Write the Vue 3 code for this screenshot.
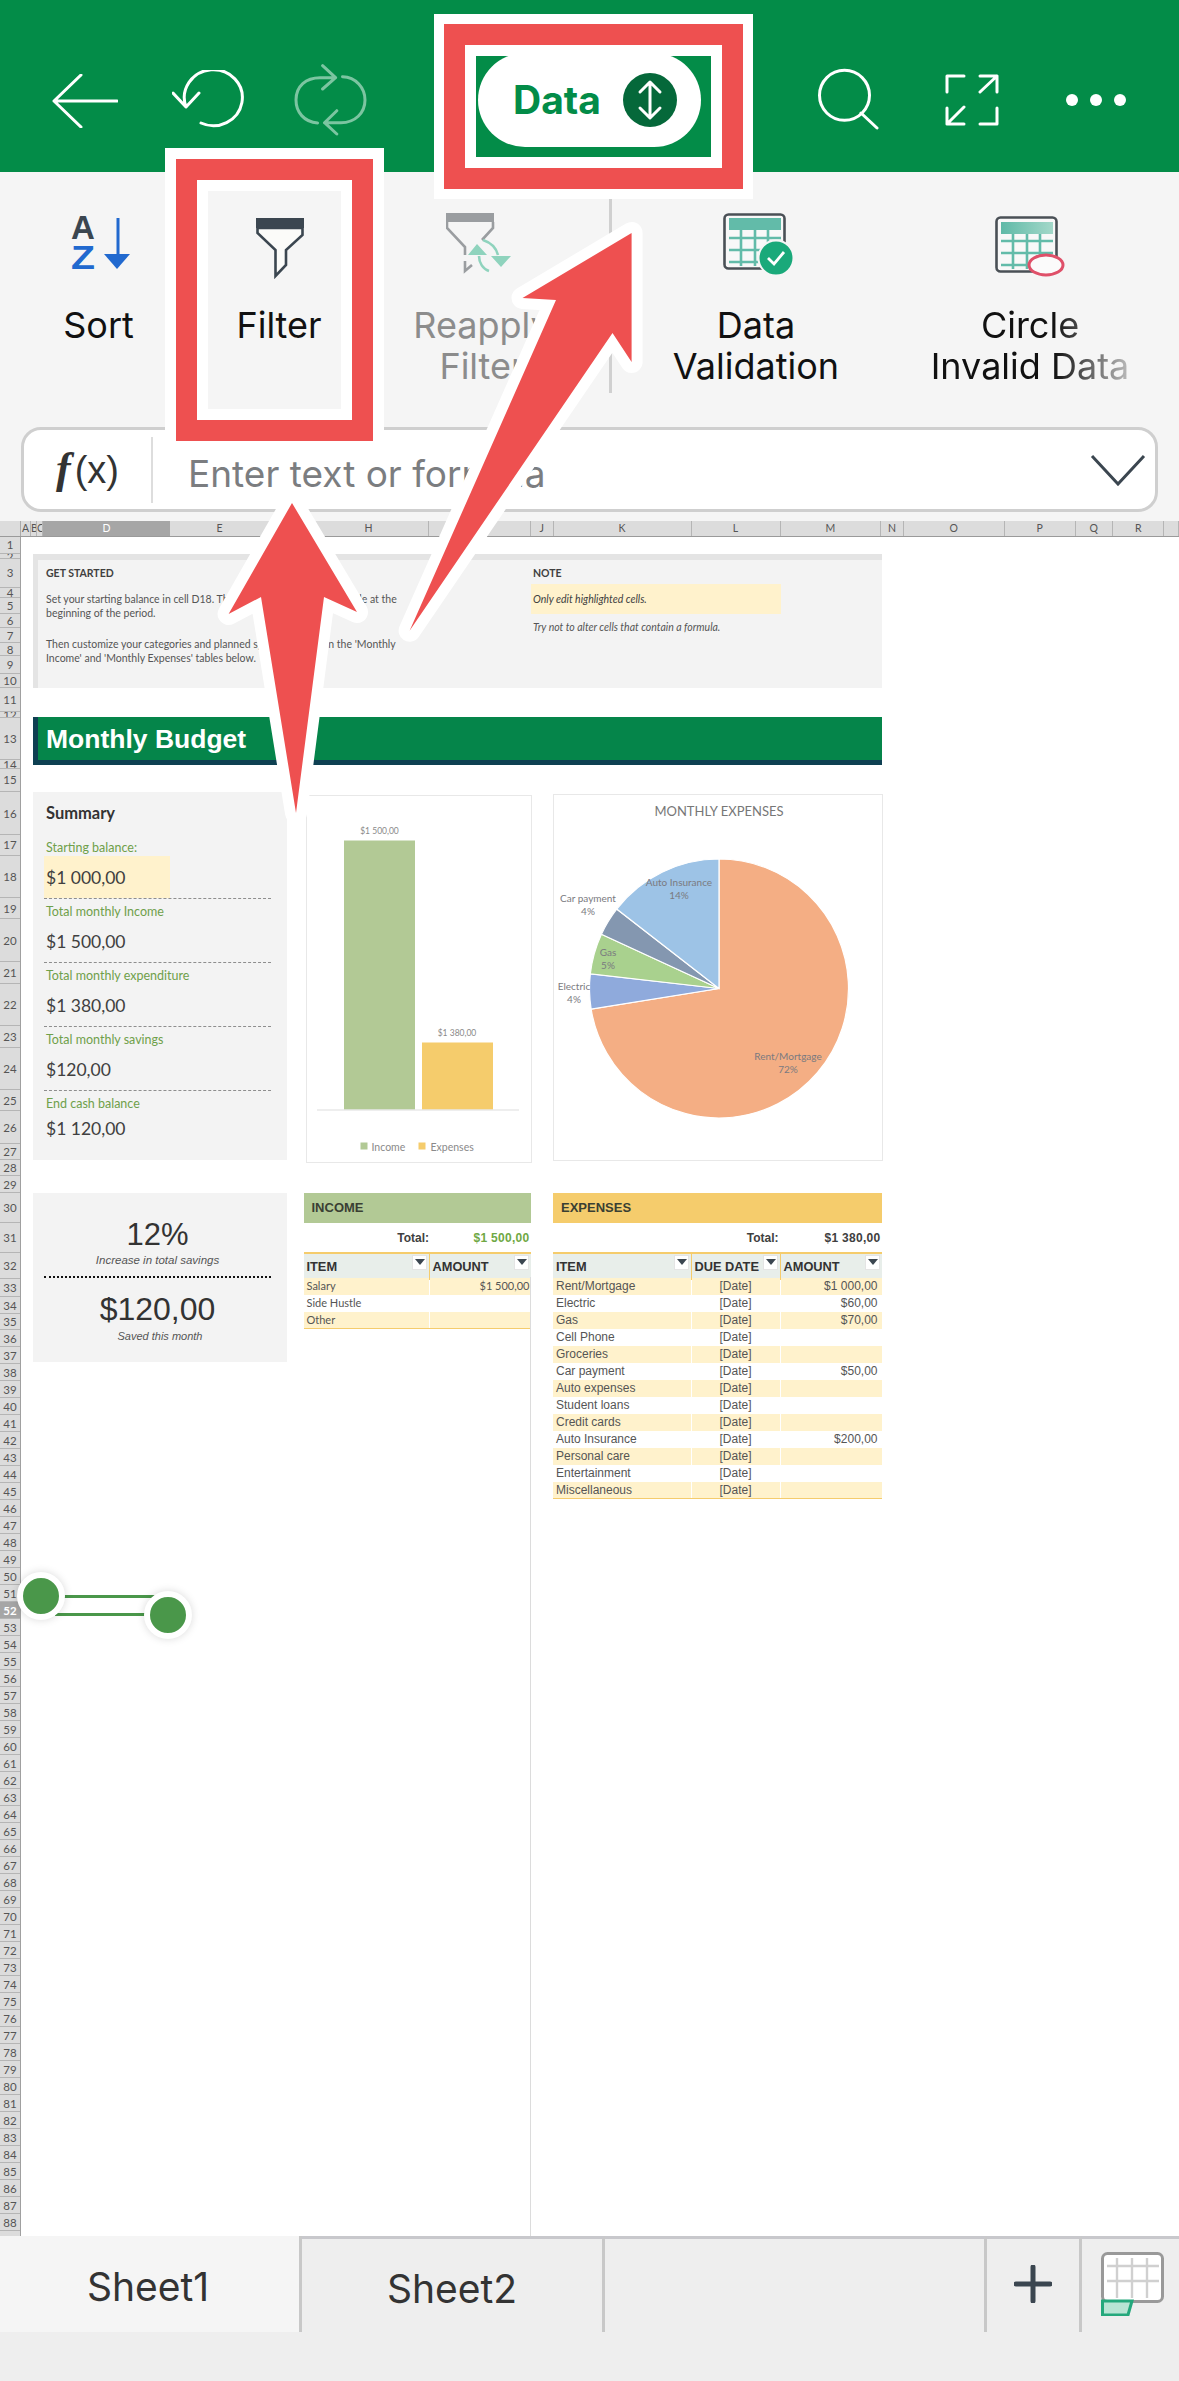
<template>
  <div class="app">
    <!-- green title bar -->
    <header class="topbar">
      <svg class="ic-back" width="66" height="54" viewBox="0 0 66 54"><path d="M2 27L29 1M2 27L29 53M2 27H65" /></svg>
      <svg class="ic-undo" width="72" height="62" viewBox="0 0 72 62"><path d="M14 37A29 28 0 1 1 29 53M1 23L14 37L27 23" /></svg>
      <svg class="ic-redo" width="74" height="72" viewBox="0 0 74 72"><path d="M23.6 59C10 58 2 48 2 36C2 22 12 13.7 26 13.7H41M28.6 1.7L41.6 13.7L28.6 25M48.5 12.7C62 13 71 24 71 36C71 49 61 58.7 47 58.7H30.5M42.8 46.7L30.5 58.7L42.8 70" /></svg>
      <div class="tab-pill">
        <span class="tab-text">Data</span>
        <span class="tab-round">
          <svg width="54" height="54" viewBox="0 0 54 54"><path d="M27 10V44M17 19L27 9L37 19M17 35L27 45L37 35" /></svg>
        </span>
      </div>
      <svg class="ic-search" width="62" height="62" viewBox="0 0 62 62"><circle cx="27.5" cy="27.3" r="25" /><path d="M44 45L60 60" /></svg>
      <svg class="ic-expand" width="54" height="52" viewBox="0 0 54 52"><path d="M2 18V2H19M35 2H52V18M52 2L35 18M2 34V50H19M2 50L19 33M35 50H52V34" /></svg>
      <svg class="ic-more" width="62" height="14" viewBox="0 0 62 14"><circle cx="7" cy="7" r="6" /><circle cx="31" cy="7" r="6" /><circle cx="55" cy="7" r="6" /></svg>
    </header>

    <!-- ribbon -->
    <section class="ribbon">
      <div class="rb-item rb-sort">
        <svg class="rb-icon" width="66" height="64" viewBox="0 0 66 64">
          <text class="az a" x="7" y="26">A</text>
          <text class="az z" x="7" y="56" textLength="24" lengthAdjust="spacingAndGlyphs">Z</text>
          <path d="M54 5V42" fill="none" stroke="#2169cf" stroke-width="3" />
          <path d="M40 41H66L53 56Z" fill="#2169cf" />
        </svg>
        <div class="rb-label">Sort</div>
      </div>
      <div class="rb-item rb-filter">
        <svg class="rb-icon" width="48" height="66" viewBox="0 0 48 66">
          <path d="M1.5 15V20L19.5 37V63L30 52V37L46.5 22V15Z" fill="#fbfbf9" stroke="#3b4650" stroke-width="2.6" />
          <rect y="5" width="48" height="10" fill="#3b4650" />
        </svg>
        <div class="rb-label">Filter</div>
      </div>
      <div class="rb-item rb-reapply">
        <svg class="rb-icon" width="66" height="64" viewBox="0 0 66 64">
          <rect width="48" height="9" fill="#9a9da0" />
          <path d="M1 9V15L19 34V42M47 9V15L36 27M19 48V58L26 52" fill="none" stroke="#9a9da0" stroke-width="2.6" />
          <path d="M22 42L31 31L41 42ZM45 43H65L55 54Z" fill="#8fd3bd" />
          <path d="M33 43C33 50 37 56 43 58M37 27C43 29 50 34 52 42" fill="none" stroke="#8fd3bd" stroke-width="2.6" />
        </svg>
        <div class="rb-label muted">Reapply<br />Filter</div>
      </div>
      <div class="rb-sep"></div>
      <div class="rb-item rb-valid">
        <svg class="rb-icon" width="72" height="64" viewBox="0 0 72 64">
          <rect x="1.5" y="1.5" width="60" height="54" rx="4" fill="#f8f8f8" stroke="#4a5056" stroke-width="2.6" />
          <rect x="6" y="5" width="52" height="12" fill="#62bba9" />
          <path d="M6 25H58M6 37H58M6 49H40M18 17V53M32 17V53M45 17V40" fill="none" stroke="#62bba9" stroke-width="2.6" />
          <circle cx="53" cy="45" r="17.5" fill="#1aa97a" stroke="#f5f5f5" stroke-width="2" />
          <path d="M45 45L51 51L61 39" fill="none" stroke="#fff" stroke-width="2.8" />
        </svg>
        <div class="rb-label">Data<br />Validation</div>
      </div>
      <div class="rb-item rb-circle">
        <svg class="rb-icon" width="72" height="64" viewBox="0 0 72 64">
          <defs>
            <linearGradient id="hd" x1="0" x2="1" y1="0" y2="0"><stop offset="0" stop-color="#5fb9a7" /><stop offset="1" stop-color="#a3d8c9" /></linearGradient>
          </defs>
          <rect x="1.5" y="1.5" width="60" height="54" rx="4" fill="#f8f8f8" stroke="#4a5056" stroke-width="2.6" />
          <rect x="6" y="6" width="52" height="12" fill="url(#hd)" />
          <path d="M6 25H58M6 37H58M6 49H40M18 18V53M32 18V53M45 18V40" fill="none" stroke="#62bba9" stroke-width="2.6" />
          <ellipse cx="51" cy="49" rx="17" ry="10" fill="#fbfbfb" stroke="#df5069" stroke-width="3" />
        </svg>
        <div class="rb-label fade">Circle<br />Invalid Data</div>
      </div>
    </section>

    <!-- formula bar -->
    <section class="formula-wrap">
      <div class="formula">
        <div class="fx"><i>f</i>(x)</div>
        <div class="fx-input">Enter text or formula</div>
        <svg class="fx-chevron" width="56" height="32" viewBox="0 0 56 32"><path d="M2 2L28 30L54 2" /></svg>
      </div>
    </section>

    <!-- column letters -->
    <div class="col-head">
      <div class="corner"></div>
      <div
        v-for="c in columns"
        :key="c.name"
        class="col"
        :class="{ on: c.name === 'D' }"
        :style="{ width: c.w + 'px' }"
      >{{ c.label }}</div>
    </div>

    <main class="grid-area">
      <div class="row-head">
        <div
          v-for="r in rows"
          :key="r.n"
          class="rw"
          :class="{ on: r.n === 52 }"
          :style="{ height: r.h + 'px', lineHeight: r.h + 'px' }"
        >{{ r.n }}</div>
      </div>

      <div class="sheet">
        <div class="intro">
          <div class="intro-left">
            <h4>GET STARTED</h4>
            <p class="p1">Set your starting balance in cell D18. This is the total amount available at the<br />beginning of the period.</p>
            <p class="p2">Then customize your categories and planned spending totals in the 'Monthly<br />Income' and 'Monthly Expenses' tables below.</p>
          </div>
          <div class="intro-right">
            <h4>NOTE</h4>
            <div class="hl">Only edit highlighted cells.</div>
            <p class="try">Try not to alter cells that contain a formula.</p>
          </div>
        </div>

        <div class="banner">Monthly Budget</div>

        <div class="dash">
          <div class="summary">
            <h3>Summary</h3>
            <div v-for="(s, i) in summary" :key="s.label" class="sm-block" :class="{ last: i === summary.length - 1 }">
              <div class="sm-label">{{ s.label }}</div>
              <div class="sm-value" :class="{ input: i === 0 }">{{ s.value }}</div>
            </div>
          </div>

          <div class="chart bar-chart">
            <svg width="226" height="368" viewBox="0 0 226 368">
              <rect x="37" y="44.5" width="71" height="269" fill="#b2c995" />
              <rect x="115" y="246.5" width="71" height="67" fill="#f5cc6c" />
              <path d="M10 314H212" stroke="#ddd" />
              <text class="lbl" x="72.5" y="37.5" text-anchor="middle">$1 500,00</text>
              <text class="lbl" x="150" y="239.5" text-anchor="middle">$1 380,00</text>
              <rect x="53.5" y="346.5" width="7" height="7" fill="#b2c995" />
              <text class="lbl big" x="64.5" y="354.5">Income</text>
              <rect x="111.5" y="346.5" width="7" height="7" fill="#f5cc6c" />
              <text class="lbl big" x="123.5" y="354.5">Expenses</text>
            </svg>
          </div>

          <div class="chart pie-chart">
            <svg width="330" height="367" viewBox="0 0 330 367">
              <text class="pie-title" x="165" y="21" text-anchor="middle">MONTHLY EXPENSES</text>
              <path
                v-for="s in slices"
                :key="s.name"
                :d="s.d"
                :fill="s.color"
                stroke="#fff"
                stroke-width="1.2"
              />
              <template v-for="s in slices" :key="s.name + '-t'">
                <text class="pie-lbl" :x="s.tx" :y="s.ty" text-anchor="middle">{{ s.name }}</text>
                <text class="pie-lbl" :x="s.tx" :y="s.ty + 12.5" text-anchor="middle">{{ s.pct }}</text>
              </template>
            </svg>
          </div>

          <div class="stats">
            <div class="big-num pct">12%</div>
            <div class="cap">Increase in total savings</div>
            <div class="dots"></div>
            <div class="big-num">$120,00</div>
            <div class="cap saved">Saved this month</div>
          </div>

          <div class="tbl income">
            <div class="tbl-title">INCOME</div>
            <div class="tbl-total">
              <span class="t-label">Total:</span>
              <span class="t-val green">$1 500,00</span>
            </div>
            <div class="tbl-head">
              <div class="th">ITEM<span class="drop"></span></div>
              <div class="th">AMOUNT<span class="drop"></span></div>
            </div>
            <div v-for="(r, i) in incomeRows" :key="r.item" class="tr" :class="{ odd: i % 2 === 0 }">
              <div class="td">{{ r.item }}</div>
              <div class="td num">{{ r.amount }}</div>
            </div>
          </div>

          <div class="tbl expenses">
            <div class="tbl-title">EXPENSES</div>
            <div class="tbl-total">
              <span class="t-label">Total:</span>
              <span class="t-val">$1 380,00</span>
            </div>
            <div class="tbl-head">
              <div class="th">ITEM<span class="drop"></span></div>
              <div class="th">DUE DATE<span class="drop"></span></div>
              <div class="th">AMOUNT<span class="drop"></span></div>
            </div>
            <div v-for="(r, i) in expenseRows" :key="r.item" class="tr" :class="{ odd: i % 2 === 0 }">
              <div class="td">{{ r.item }}</div>
              <div class="td mid">[Date]</div>
              <div class="td num">{{ r.amount }}</div>
            </div>
          </div>
        </div>

        <div class="page-line"></div>
      </div>
    </main>

    <!-- sheet tabs -->
    <footer class="tabs">
      <div class="tab-row">
        <div class="sheet-tab active">Sheet1</div>
        <div class="sheet-tab">Sheet2</div>
        <div class="tab-space"></div>
        <div class="tab-add">
          <svg width="38" height="38" viewBox="0 0 38 38"><path d="M19 2V36M2 19H36" /></svg>
        </div>
        <div class="tab-grid">
          <svg width="64" height="64" viewBox="0 0 64 64">
            <rect x="1.5" y="1.5" width="60" height="48" rx="5" fill="#fff" stroke="#999" stroke-width="3" />
            <path d="M6 14H58M6 29H58M16 6V46M31 6V46M46 6V46" fill="none" stroke="#d0d0d0" stroke-width="2.4" />
            <path d="M1.5 49H31L27 63H1.5Z" fill="#b8e4d4" stroke="#24a87c" stroke-width="3" />
          </svg>
        </div>
      </div>
    </footer>

    <!-- selection handles -->
    <div class="sel-line sel-top"></div>
    <div class="sel-line sel-bottom"></div>
    <div class="handle h-left"></div>
    <div class="handle h-right"></div>

    <!-- red tutorial marks -->
    <div class="callout c-data"><div><div></div></div></div>
    <div class="callout c-filter"><div><div></div></div></div>
    <svg class="marks" width="1179" height="2381" viewBox="0 0 1179 2381">
      <polygon points="631.6,233 631.6,362 612.5,333 409.6,630.7 556,300 522.5,298" />
      <polygon points="292,503 357,612 324,597 296,813 261,597 228.6,614" />
    </svg>
  </div>
</template>

<script setup>
import { computed } from 'vue'

const columns = [
  ['A', 10], ['B', 6], ['C', 6], ['D', 127], ['E', 100], ['F', 20], ['G', 19], ['H', 120], ['I', 102],
  ['J', 22.5], ['K', 138], ['L', 89], ['M', 100.5], ['N', 23], ['O', 100.6], ['P', 71], ['Q', 37.4], ['R', 51.5], ['S', 14.5],
].map(([name, w]) => ({ name, w, label: name === 'S' ? '' : name }))

// row heights read off the sheet, the rest are default 17
const customHeights = [
  16.7, 5.7, 28.3, 10.7, 16, 13.3, 15, 13.3, 17.7, 14, 24.7, 5.3, 42, 9.7, 22.3,
  43.3, 20.7, 42, 21, 43, 22, 42, 22, 42, 21, 33, 16, 16, 17.7, 30, 30, 25.3, 18, 17, 16,
]
const rows = Array.from({ length: 89 }, (_, i) => ({ n: i + 1, h: customHeights[i] || 17 }))

const summary = [
  { label: 'Starting balance:', value: '$1 000,00' },
  { label: 'Total monthly Income', value: '$1 500,00' },
  { label: 'Total monthly expenditure', value: '$1 380,00' },
  { label: 'Total monthly savings', value: '$120,00' },
  { label: 'End cash balance', value: '$1 120,00' },
]

const incomeRows = [
  { item: 'Salary', amount: '$1 500,00' },
  { item: 'Side Hustle', amount: '' },
  { item: 'Other', amount: '' },
]

const expenseRows = [
  { item: 'Rent/Mortgage', amount: '$1 000,00' },
  { item: 'Electric', amount: '$60,00' },
  { item: 'Gas', amount: '$70,00' },
  { item: 'Cell Phone', amount: '' },
  { item: 'Groceries', amount: '' },
  { item: 'Car payment', amount: '$50,00' },
  { item: 'Auto expenses', amount: '' },
  { item: 'Student loans', amount: '' },
  { item: 'Credit cards', amount: '' },
  { item: 'Auto Insurance', amount: '$200,00' },
  { item: 'Personal care', amount: '' },
  { item: 'Entertainment', amount: '' },
  { item: 'Miscellaneous', amount: '' },
]

const pieData = [
  { name: 'Rent/Mortgage', value: 1000, pct: '72%', color: '#f4ae84', tx: 234, ty: 265 },
  { name: 'Electric', value: 60, pct: '4%', color: '#8faadc', tx: 20, ty: 195 },
  { name: 'Gas', value: 70, pct: '5%', color: '#a9d18e', tx: 54, ty: 161 },
  { name: 'Car payment', value: 50, pct: '4%', color: '#8497b0', tx: 34, ty: 107 },
  { name: 'Auto Insurance', value: 200, pct: '14%', color: '#9dc3e6', tx: 125, ty: 91 },
]

const slices = computed(() => {
  const cx = 165
  const cy = 193.5
  const r = 129.5
  const total = pieData.reduce((a, p) => a + p.value, 0)
  let angle = -Math.PI / 2
  return pieData.map(p => {
    const next = angle + (p.value / total) * Math.PI * 2
    const x1 = cx + r * Math.cos(angle)
    const y1 = cy + r * Math.sin(angle)
    const x2 = cx + r * Math.cos(next)
    const y2 = cy + r * Math.sin(next)
    const large = next - angle > Math.PI ? 1 : 0
    angle = next
    return { ...p, d: `M${cx} ${cy}L${x1} ${y1}A${r} ${r} 0 ${large} 1 ${x2} ${y2}Z` }
  })
})
</script>

<style>
html, body {
  margin: 0;
  background: #fff;
}
</style>

<style scoped>
.app {
  position: relative;
  width: 1179px;
  height: 2381px;
  overflow: hidden;
  display: flex;
  flex-direction: column;
  background: #fff;
  font-family: Lato, sans-serif;
  color: #404040;
}

/* title bar */
.topbar {
  flex: none;
  height: 172px;
  background: #038c48;
  display: flex;
  align-items: flex-start;
}
.topbar svg {
  display: block;
  flex: none;
  fill: none;
  stroke: #fff;
  stroke-width: 3;
  stroke-linecap: round;
  stroke-linejoin: round;
}
.ic-back { margin: 74px 0 0 52px; }
.ic-undo { margin: 70px 0 0 54px; }
.ic-redo { margin: 64px 0 0 50px; stroke: #7cc5a1 !important; }
.tab-pill {
  flex: none;
  margin: 53px 0 0 110px;
  width: 223px;
  height: 94px;
  border-radius: 47px;
  background: #fff;
  display: flex;
  align-items: center;
  padding-left: 35px;
  box-sizing: border-box;
  font: 700 39px Inter, sans-serif;
  color: #038c48;
}
.tab-text { margin-bottom: 2px; }
.tab-round {
  margin-left: 22px;
  width: 54px;
  height: 54px;
  border-radius: 50%;
  background: #05683a;
}
.ic-search { margin: 68px 0 0 116px; }
.ic-expand { margin: 74px 0 0 66px; }
.ic-more { margin: 93px 0 0 66px; fill: #fff !important; stroke: none !important; }

/* ribbon */
.ribbon {
  flex: none;
  height: 255px;
  background: #f5f5f5;
  display: flex;
  position: relative;
}
.rb-item {
  flex: none;
  display: flex;
  flex-direction: column;
  align-items: center;
  box-sizing: border-box;
  padding-top: 41px;
}
.rb-icon {
  display: block;
  height: 64px;
  margin-bottom: 28px;
}
.rb-label {
  font: 400 36px/41px Inter, sans-serif;
  color: #111;
  text-align: center;
  white-space: nowrap;
}
.rb-label.muted { color: #8c8c8c; margin-left: 12px; }
.rb-label.fade {
  background: linear-gradient(90deg, #111 62%, #bbb 100%);
  -webkit-background-clip: text;
  background-clip: text;
  color: transparent;
}
.rb-sort { width: 197px; }
.rb-sort .rb-icon { margin-left: -4px; }
.rb-filter { width: 164px; }
.rb-filter .rb-icon { margin-left: 1px; height: 66px; margin-bottom: 26px; }
.rb-reapply { width: 230px; }
.rb-reapply .rb-icon { margin-left: 6px; }
.rb-sep {
  flex: none;
  width: 3px;
  margin: 27px 17px 34px 18px;
  background: #d0d0d0;
}
.rb-valid { width: 292px; margin-left: -29px; padding-left: 20px; }
.rb-valid .rb-icon { margin-left: 5px; }
.rb-circle { width: 276px; padding-top: 44px; }
.rb-circle .rb-icon { margin: 0 0 25px 2px; }
.az { font: 700 33px "Liberation Sans", sans-serif; }
.az.a { fill: #3b4650; }
.az.z { fill: #2169cf; }

/* formula */
.formula-wrap {
  flex: none;
  height: 94px;
  background: #f5f5f5;
  padding: 0 21px 0 21px;
  box-sizing: border-box;
}
.formula {
  height: 85px;
  box-sizing: border-box;
  background: #fff;
  border: 3px solid #cfcfcf;
  border-radius: 20px;
  display: flex;
  align-items: center;
}
.fx {
  width: 129px;
  height: 66px;
  flex: none;
  box-sizing: border-box;
  padding-left: 32px;
  border-right: 2px solid #ddd;
  font: 400 38px/66px "Liberation Sans", sans-serif;
  color: #333;
  white-space: nowrap;
}
.fx i {
  font: italic 700 44px "Liberation Serif", serif;
  margin-right: 4px;
}
.fx-input {
  flex: 1;
  padding: 8px 0 0 35px;
  font: 400 37px Inter, sans-serif;
  color: #7b7d80;
}
.fx-chevron {
  flex: none;
  margin-right: 9px;
  fill: none;
  stroke: #3b4650;
  stroke-width: 3;
}

/* headers */
.col-head {
  flex: none;
  height: 16px;
  display: flex;
  background: #dcdcdc;
  border-bottom: 1px solid #9a9a9a;
  box-sizing: border-box;
  overflow: hidden;
}
.corner {
  width: 21px;
  flex: none;
  border-right: 1px solid #aaa;
  box-sizing: border-box;
}
.col {
  flex: none;
  box-sizing: border-box;
  border-right: 1px solid #b5b5b5;
  text-align: center;
  font-size: 10.5px;
  line-height: 15px;
  color: #555;
  overflow: hidden;
}
.col.on {
  background: #a6a6a6;
  color: #fff;
  border-right: 0;
}
.grid-area {
  flex: 1;
  min-height: 0;
  display: flex;
  overflow: hidden;
}
.row-head {
  flex: none;
  width: 21px;
  background: #dcdcdc;
  border-right: 1px solid #a0a0a0;
  box-sizing: border-box;
  overflow: hidden;
}
.rw {
  box-sizing: border-box;
  border-bottom: 1px solid #b5b5b5;
  text-align: center;
  font-size: 11.5px;
  color: #555;
  overflow: hidden;
}
.rw.on {
  background: #a6a6a6;
  color: #fff;
  font-weight: 700;
}
.sheet {
  position: relative;
  flex: 1;
  padding-left: 12px;
}

/* get started */
.intro {
  margin-top: 17px;
  width: 849px;
  height: 134px;
  box-sizing: border-box;
  background: #f3f3f3;
  border-top: 6px solid #e4e4e4;
  border-left: 5px solid #e4e4e4;
  display: flex;
  font-size: 10.5px;
  line-height: 13.5px;
  color: #555;
}
.intro h4 {
  margin: 0;
  font-size: 10.5px;
  font-weight: 700;
  line-height: 14px;
  color: #404040;
}
.intro p { margin: 0; white-space: nowrap; }
.intro-left { width: 493px; padding: 6px 0 0 8px; box-sizing: border-box; }
.p1 { margin-top: 13px !important; }
.p2 { margin-top: 18px !important; }
.intro-right { flex: 1; padding-top: 6px; }
.intro-right h4 { padding-left: 2px; }
.hl {
  margin-top: 4px;
  width: 250px;
  height: 30px;
  line-height: 30px;
  padding-left: 2px;
  box-sizing: border-box;
  background: #fff2cc;
  font-style: italic;
  color: #404040;
}
.try {
  margin-top: 7px !important;
  padding-left: 2px;
  font-style: italic;
}

.banner {
  margin-top: 29px;
  width: 849px;
  height: 48px;
  box-sizing: border-box;
  background: #05854a;
  border-left: 5px solid #0e4052;
  border-bottom: 5px solid #0e4052;
  padding-left: 8px;
  font: 700 26.5px/45px "Liberation Sans", sans-serif;
  color: #fff;
}

/* dashboard */
.dash {
  margin-top: 27px;
  display: grid;
  grid-template-columns: 270.5px 249.5px 330px;
  grid-template-rows: 401px auto;
  align-items: start;
}
.summary {
  width: 254px;
  height: 368px;
  background: #f3f3f3;
  box-sizing: border-box;
  padding: 0 16px 0 11px;
}
.summary h3 {
  margin: 0;
  height: 43px;
  padding-left: 2px;
  font: 700 16.5px/42px Lato, sans-serif;
  color: #333;
}
.sm-block {
  height: 64px;
  box-sizing: border-box;
  border-bottom: 1px dashed #8e8e8e;
}
.sm-block.last { border-bottom: 0; }
.sm-label {
  height: 21px;
  padding-left: 2px;
  font-size: 12.5px;
  line-height: 26px;
  color: #6fa04a;
}
.sm-value {
  height: 42px;
  padding-left: 2px;
  font-size: 17.5px;
  line-height: 44px;
  color: #404040;
}
.sm-block.last .sm-value { line-height: 34px; }
.sm-value.input {
  width: 126px;
  background: #fff2cc;
  box-sizing: border-box;
}
.chart {
  background: #fff;
  border: 1px solid #e8e8e8;
  box-sizing: border-box;
}
.chart svg { display: block; }
.bar-chart { width: 226px; height: 368px; margin: 3px 0 0 2px; }
.pie-chart { width: 330px; height: 367px; margin-top: 2px; }
.lbl { font: 8.5px Lato, sans-serif; fill: #8a8a8a; }
.lbl.big { font-size: 10.5px; }
.pie-title { font: 13px Lato, sans-serif; fill: #777; }
.pie-lbl { font: 10px Lato, sans-serif; fill: #7a7a80; }

.stats {
  width: 254px;
  height: 169px;
  background: #f3f3f3;
  text-align: center;
  box-sizing: border-box;
  padding-top: 24px;
  font-family: "Liberation Sans", sans-serif;
}
.big-num {
  font-size: 32px;
  line-height: 36px;
  color: #333;
  margin-left: -5px;
}
.big-num.pct { font-size: 31px; line-height: 35px; }
.cap {
  font-size: 11.5px;
  font-style: italic;
  line-height: 14px;
  color: #555;
  margin: 1px 0 0 -5px;
}
.dots {
  margin: 9px 16px 13px 11px;
  border-top: 2px dotted #111;
}
.cap.saved { margin: 2px 0 0 0; font-size: 11px; }

/* tables */
.tbl {
  font-family: "Liberation Sans", sans-serif;
  box-sizing: border-box;
}
.income { width: 227px; }
.expenses { width: 328.5px; }
.tbl-title {
  height: 30px;
  padding-left: 8px;
  font-weight: 700;
  font-size: 13px;
  line-height: 30px;
  color: #3a3f33;
}
.income .tbl-title { background: #b2c995; }
.expenses .tbl-title { background: #f5cc6c; }
.tbl-total {
  height: 29px;
  display: flex;
  align-items: center;
  font-size: 12px;
  font-weight: 700;
  color: #404040;
}
.t-label { text-align: right; }
.income .t-label { width: 125.5px; }
.expenses .t-label { width: 225.5px; }
.t-val { flex: 1; text-align: right; padding-right: 1px; letter-spacing: 0.3px; }
.t-val.green { color: #6fa844; }
.tbl-head {
  display: grid;
  height: 26px;
  background: #e8eeea;
  border-top: 2px solid #f5cc6c;
  box-sizing: border-box;
}
.income .tbl-head, .income .tr { grid-template-columns: 126px 101px; }
.expenses .tbl-head, .expenses .tr { grid-template-columns: 138.5px 89px 101px; }
.th {
  position: relative;
  padding-left: 3px;
  font-size: 12.8px;
  font-weight: 700;
  line-height: 26px;
  color: #333;
  white-space: nowrap;
  box-sizing: border-box;
  border-right: 1px solid #f5cc6c;
}
.th:last-child { border-right: 0; }
.drop {
  position: absolute;
  right: 2px;
  top: 1px;
  width: 15px;
  height: 15px;
  box-sizing: border-box;
  background: #fff;
  border: 1px solid #e4e4e4;
}
.drop::after {
  content: "";
  position: absolute;
  left: 2px;
  top: 3px;
  border-left: 5px solid transparent;
  border-right: 5px solid transparent;
  border-top: 6px solid #3b4650;
}
.tr { display: grid; height: 17px; }
.tr.odd { background: #fff2cc; }
.td {
  padding: 0 3px;
  line-height: 16px;
  color: #555;
  border-right: 1px solid #fff;
  box-sizing: border-box;
  white-space: nowrap;
}
.td:last-child { border-right: 0; }
.td.mid { text-align: center; }
.td.num { text-align: right; padding-right: 4px; }
.income .td { font: 11px/16px Lato, sans-serif; }
.income .td.num { padding-right: 1px; }
.expenses .td { font-size: 12px; }
.tbl .tr:last-child { border-bottom: 1.5px solid #f5cc6c; box-sizing: border-box; }

.page-line {
  position: absolute;
  left: 509px;
  top: 740px;
  bottom: 0;
  border-left: 1px solid #dcdcdc;
}

/* sheet tabs */
.tabs {
  flex: none;
  height: 145px;
  background: #eeeeee;
}
.tab-row {
  height: 96px;
  display: flex;
}
.sheet-tab {
  flex: none;
  width: 303px;
  box-sizing: border-box;
  border-top: 3px solid #c8c8cc;
  border-right: 3px solid #c8c8c8;
  text-align: center;
  font: 400 39px/99px Inter, sans-serif;
  color: #333;
}
.sheet-tab.active {
  width: 302px;
  background: #f5f5f5;
  border-top: 0;
  padding-right: 3px;
  line-height: 102px;
}
.tab-space {
  flex: none;
  width: 382px;
  box-sizing: border-box;
  border-top: 3px solid #c8c8cc;
  border-right: 3px solid #c8c8c8;
}
.tab-add {
  flex: none;
  width: 95px;
  box-sizing: border-box;
  border-top: 3px solid #c8c8cc;
  border-right: 3px solid #c8c8c8;
  display: flex;
  justify-content: center;
  padding-top: 26px;
}
.tab-add svg {
  fill: none;
  stroke: #3b4650;
  stroke-width: 5;
  stroke-linecap: round;
}
.tab-grid {
  flex: 1;
  border-top: 3px solid #c8c8cc;
  padding: 13px 0 0 19px;
}

/* selection handles */
.sel-line {
  position: absolute;
  height: 3px;
  background: #4a974a;
}
.sel-top { left: 60px; top: 1595px; width: 95px; }
.sel-bottom { left: 55px; top: 1613px; width: 95px; }
.handle {
  position: absolute;
  width: 36px;
  height: 36px;
  box-sizing: content-box;
  border: 6px solid #fff;
  border-radius: 50%;
  background: #4a974a;
  box-shadow: 0 0 8px rgba(0, 0, 0, 0.15);
}
.h-left { left: 17px; top: 1572px; }
.h-right { left: 144px; top: 1591px; }

/* tutorial marks */
.callout {
  position: absolute;
  box-sizing: border-box;
  border: 10px solid #fff;
}
.callout > div {
  height: 100%;
  box-sizing: border-box;
  border: 21.5px solid #ee5050;
}
.callout > div > div {
  height: 100%;
  box-sizing: border-box;
  border: 11px solid #fff;
}
.c-data { left: 434px; top: 14px; width: 319px; height: 185px; }
.c-filter { left: 165px; top: 148px; width: 219px; height: 304px; border-width: 11px; }
.marks {
  position: absolute;
  left: 0;
  top: 0;
  pointer-events: none;
}
.marks polygon {
  fill: #ee5050;
  stroke: #fff;
  stroke-width: 22;
  stroke-linejoin: round;
  paint-order: stroke;
}
</style>
